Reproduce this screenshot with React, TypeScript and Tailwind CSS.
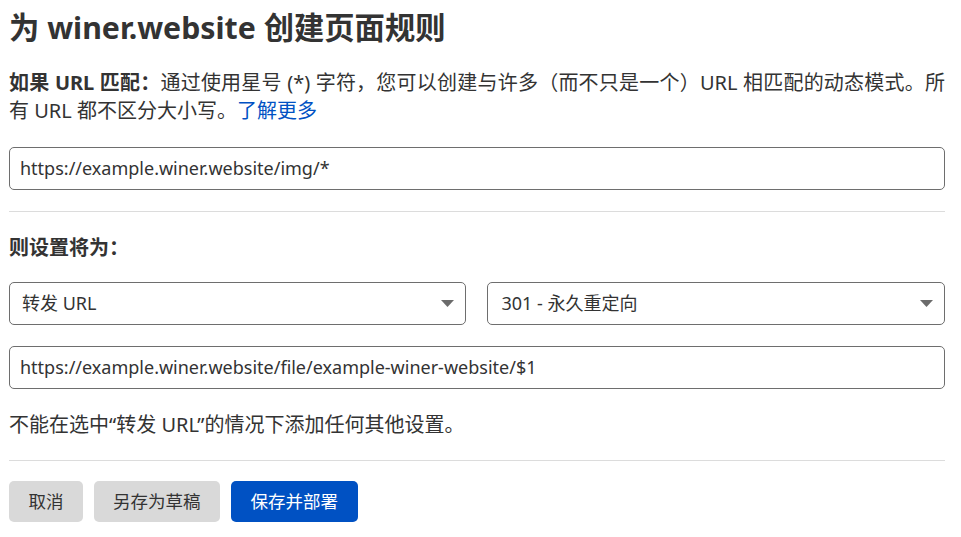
import React from "react";

const font = { fontFamily: '"Noto Sans", "Noto Sans CJK SC", sans-serif' };

function Caret() {
  return (
    <svg width="13" height="7" viewBox="0 0 13 7" className="shrink-0">
      <path d="M0 0 L13 0 L6.5 7 Z" fill="#6b6b6b" />
    </svg>
  );
}

export default function App() {
  return (
    <div className="w-[961px] h-[537px] bg-white text-[#333333] overflow-hidden" style={font}>
      <div className="pl-[9px] pr-[16px] pt-[8px]">
        <h1 className="text-[30.3px] font-bold leading-[40px]">为 winer.website 创建页面规则</h1>
        <p className="mt-[21px] text-[20px] leading-[28px] text-justify">
          <span className="font-bold">如果 URL 匹配：</span>通过使用星号 (*) 字符，您可以创建与许多（而不只是一个）URL 相匹配的动态模式。所有 URL 都不区分大小写。<span className="text-[#0051c3]">了解更多</span>
        </p>
        <div className="mt-[22px] h-[43px] rounded-[5px] border border-[#6e6e6e] flex items-center px-[10px] text-[18px]">
          https://example.winer.website/img/*
        </div>
        <div className="mt-[21px] h-px bg-[#dcdcdc]" />
        <div className="mt-[22px] text-[20px] font-bold leading-[28px]">则设置将为：</div>
        <div className="mt-[20px] flex gap-[21px]">
          <div className="flex-1 h-[43px] rounded-[5px] border border-[#6e6e6e] flex items-center justify-between pl-[12px] pr-[11px] text-[18px]">
            <span>转发 URL</span>
            <Caret />
          </div>
          <div className="flex-1 h-[43px] rounded-[5px] border border-[#6e6e6e] flex items-center justify-between pl-[14px] pr-[11px] text-[18px]">
            <span>301 - 永久重定向</span>
            <Caret />
          </div>
        </div>
        <div className="mt-[21px] h-[43px] rounded-[5px] border border-[#6e6e6e] flex items-center px-[10px] text-[18px]">
          https://example.winer.website/file/example-winer-website/$1
        </div>
        <p className="mt-[22px] text-[20px] leading-[28px]">不能在选中“转发 URL”的情况下添加任何其他设置。</p>
        <div className="mt-[21px] h-px bg-[#dcdcdc]" />
        <div className="mt-[20px] flex gap-[11px]">
          <button className="h-[41px] px-[19.5px] rounded-[5px] bg-[#d9d9d9] text-[17.5px] text-[#333333]">取消</button>
          <button className="h-[41px] px-[19px] rounded-[5px] bg-[#d9d9d9] text-[17.5px] text-[#333333]">另存为草稿</button>
          <button className="h-[41px] px-[20px] rounded-[5px] bg-[#0051c3] text-[17.5px] text-white">保存并部署</button>
        </div>
      </div>
    </div>
  );
}
